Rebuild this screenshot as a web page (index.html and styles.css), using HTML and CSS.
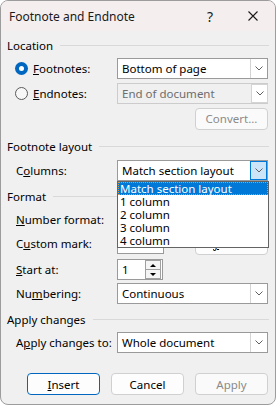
FILE: index.html
```html
<!DOCTYPE html>
<html lang="en">
<head>
    <meta charset="UTF-8">
    <title>Footnote and Endnote</title>
    <link rel="stylesheet" href="styles.css">
</head>
<body>
    <div class="window">
        <div class="titlebar">
            <span class="title">Footnote and Endnote</span>
            <span class="help">?</span>
            <svg class="close" width="10" height="10" viewBox="0 0 10 10">
                <path d="M0.5 0.5 L9.5 9.5 M9.5 0.5 L0.5 9.5" stroke="#1a1a1a" stroke-width="1.1" fill="none"/>
            </svg>
        </div>

        <div class="content">
            <div class="group-title">Location</div>

            <div class="row m5">
                <label class="radio-label"><span class="radio checked"></span><span><u>F</u>ootnotes:</span></label>
                <div class="combo">
                    <span class="combo-text">Bottom of page</span>
                    <span class="combo-btn"><svg width="8" height="5" viewBox="0 0 8 5"><path d="M0.5 0.5 L4 4 L7.5 0.5" stroke="#606060" fill="none"/></svg></span>
                </div>
            </div>

            <div class="row m4">
                <label class="radio-label"><span class="radio"></span><span><u>E</u>ndnotes:</span></label>
                <div class="combo disabled">
                    <span class="combo-text">End of document</span>
                    <span class="combo-btn"><svg width="8" height="5" viewBox="0 0 8 5"><path d="M0.5 0.5 L4 4 L7.5 0.5" stroke="#606060" fill="none"/></svg></span>
                </div>
            </div>

            <div class="row m4 right">
                <button class="btn" disabled>Convert...</button>
            </div>

            <div class="group-title m9">Footnote layout</div>

            <div class="row m6">
                <span class="label">C<u>o</u>lumns:</span>
                <div class="combo open">
                    <span class="combo-text">Match section layout</span>
                    <span class="combo-btn"><svg width="8" height="5" viewBox="0 0 8 5"><path d="M0.5 0.5 L4 4 L7.5 0.5" stroke="#606060" fill="none"/></svg></span>
                    <ul class="dropdown">
                        <li class="selected">Match section layout</li>
                        <li>1 column</li>
                        <li>2 column</li>
                        <li>3 column</li>
                        <li>4 column</li>
                    </ul>
                </div>
            </div>

            <div class="group-title m7">Format</div>

            <div class="row m5">
                <span class="label"><u>N</u>umber format:</span>
                <!-- covered by the open list -->
                <div class="combo"></div>
            </div>

            <div class="row m3">
                <span class="label">C<u>u</u>stom mark:</span>
                <div class="textbox"></div>
                <button class="btn symbol">S<u>y</u>mbol...</button>
            </div>

            <div class="row m5">
                <span class="label"><u>S</u>tart at:</span>
                <div class="spinner">
                    <span class="spin-value">1</span>
                    <span class="spin-btns">
                        <span class="spin up"></span>
                        <span class="spin down"></span>
                    </span>
                </div>
            </div>

            <div class="row m3">
                <span class="label">Nu<u>m</u>bering:</span>
                <div class="combo">
                    <span class="combo-text">Continuous</span>
                    <span class="combo-btn"><svg width="8" height="5" viewBox="0 0 8 5"><path d="M0.5 0.5 L4 4 L7.5 0.5" stroke="#606060" fill="none"/></svg></span>
                </div>
            </div>

            <div class="group-title m7">Apply changes</div>

            <div class="row m5">
                <span class="label">A<u>p</u>ply changes to:</span>
                <div class="combo">
                    <span class="combo-text">Whole document</span>
                    <span class="combo-btn"><svg width="8" height="5" viewBox="0 0 8 5"><path d="M0.5 0.5 L4 4 L7.5 0.5" stroke="#606060" fill="none"/></svg></span>
                </div>
            </div>

            <div class="buttons">
                <button class="btn default"><u>I</u>nsert</button>
                <button class="btn">Cancel</button>
                <button class="btn" disabled>Apply</button>
            </div>
        </div>
    </div>
</body>
</html>
```

FILE: styles.css
```css
* {
    box-sizing: border-box;
}

body {
    margin: 0;
    background: #ffffff;
    font-family: "Noto Sans", sans-serif;
    font-size: 11.5px;
    color: #000;
}

.window {
    width: 276px;
    height: 405px;
    border: 1px solid #9c9c9c;
    border-radius: 8px;
    background: #f0f0f0;
    overflow: hidden;
}

.titlebar {
    height: 30px;
    background: #f4eeee;
    display: flex;
    align-items: center;
    padding-left: 8px;
    color: #1a1a1a;
    font-size: 12px;
}

.title {
    flex: 1;
}

.help {
    font-size: 14px;
    margin-right: 35px;
}

.close {
    margin-right: 17px;
}

.content {
    padding: 6px 6px 0 6px;
}

/* group headers with the line after them */
.group-title {
    display: flex;
    align-items: center;
    height: 16px;
    gap: 7px;
}

.group-title::after {
    content: "";
    flex: 1;
    height: 1px;
    background: #d9d9d9;
}

.m3 { margin-top: 3px; }
.m4 { margin-top: 4px; }
.m5 { margin-top: 5px; }
.m6 { margin-top: 6px; }
.m7 { margin-top: 7px; }
.m9 { margin-top: 9px; }

.row {
    display: flex;
    align-items: center;
    height: 21px;
}

.row.right {
    justify-content: flex-end;
    padding-right: 1px;
}

.label {
    width: 110px;
    padding-left: 9px;
}

.radio-label {
    width: 110px;
    display: flex;
    align-items: center;
    padding-left: 8px;
}

.radio {
    width: 13px;
    height: 13px;
    border-radius: 50%;
    border: 1px solid #5a5a5a;
    background: #f7f7f7;
    margin-right: 5px;
}

.radio.checked {
    border: none;
    background: #0067c0;
    display: flex;
    align-items: center;
    justify-content: center;
}

.radio.checked::after {
    content: "";
    width: 5px;
    height: 5px;
    border-radius: 50%;
    background: #fff;
}

.combo {
    position: relative;
    width: 151px;
    height: 21px;
    border: 1px solid #9a9a9a;
    background: #fff;
    display: flex;
    align-items: center;
}

.combo-text {
    flex: 1;
    padding-left: 4px;
    white-space: nowrap;
}

.combo-btn {
    width: 17px;
    height: 100%;
    border-left: 1px solid #d4d4d4;
    background: #fff;
    display: flex;
    align-items: center;
    justify-content: center;
}

.combo.disabled {
    border-color: #cccccc;
    background: #f0f0f0;
    color: #6d6d6d;
}

.combo.disabled .combo-btn {
    border: 1px solid #d4d4d4;
    margin-right: -1px;
}

.combo.open .combo-btn {
    height: 19px;
    border: 1px solid #0078d7;
    background: #cce4f7;
}

.dropdown {
    position: absolute;
    top: 20px;
    left: -1px;
    width: 152px;
    margin: 0;
    padding: 0;
    list-style: none;
    background: #fff;
    border: 1px solid #646464;
    z-index: 2;
}

.dropdown li {
    height: 13px;
    line-height: 13px;
    padding-left: 2px;
    white-space: nowrap;
}

.dropdown li.selected {
    background: #0078d7;
    color: #fff;
    outline: 1px dotted #e09a3c;
    outline-offset: -1px;
}

.textbox {
    width: 47px;
    height: 21px;
    border: 1px solid #9a9a9a;
    background: #fff;
}

.btn {
    width: 73px;
    height: 22px;
    border: 1px solid #d0d0d0;
    border-radius: 4px;
    background: #fdfdfd;
    font-family: "Noto Sans", sans-serif;
    font-size: 11.5px;
    color: #000;
    padding: 0;
}

.btn:disabled {
    color: #8a8a8a;
    background: #fafafa;
}

.btn.default {
    border-color: #0067c0;
}

.btn.symbol {
    margin-left: auto;
    margin-right: 1px;
}

.spinner {
    width: 46px;
    height: 21px;
    border: 1px solid #9a9a9a;
    background: #fff;
    display: flex;
    align-items: center;
}

.spin-value {
    flex: 1;
    padding-left: 4px;
}

.spin-btns {
    width: 16px;
    height: 19px;
    display: flex;
    flex-direction: column;
    margin-right: 1px;
}

.spin {
    flex: 1;
    border: 1px solid #a0a0a0;
    background: #f5f5f5;
    display: flex;
    align-items: center;
    justify-content: center;
}

.spin.down {
    border-top: none;
}

.spin.up::after {
    content: "";
    border-left: 3px solid transparent;
    border-right: 3px solid transparent;
    border-bottom: 3px solid #000;
}

.spin.down::after {
    content: "";
    border-left: 3px solid transparent;
    border-right: 3px solid transparent;
    border-top: 3px solid #000;
}

.buttons {
    display: flex;
    justify-content: flex-end;
    gap: 11px;
    margin-top: 20px;
    padding-right: 1px;
}
```
